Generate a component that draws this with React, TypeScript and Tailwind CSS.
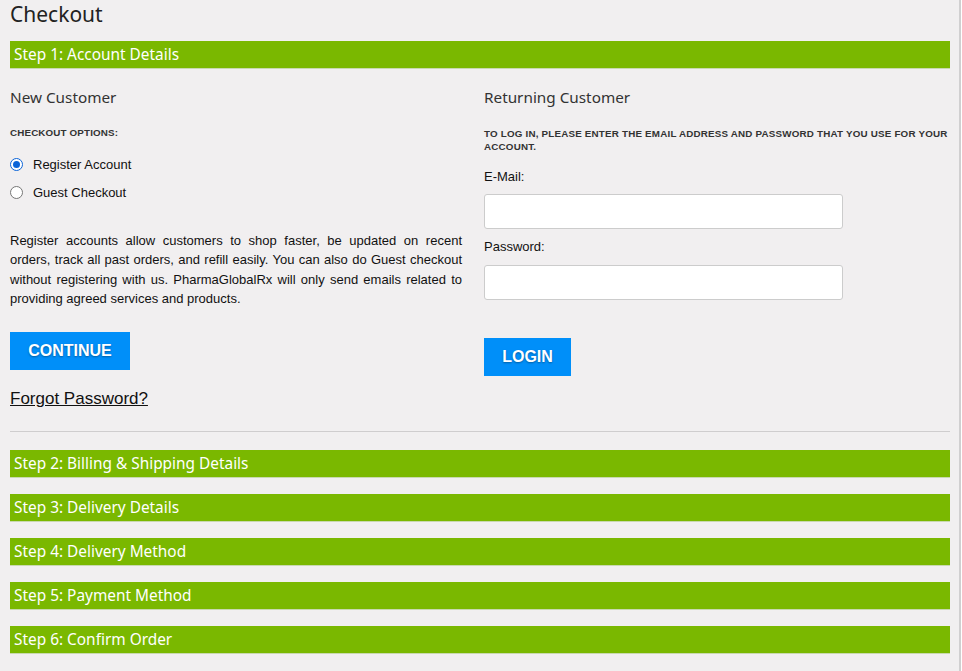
import React from "react";

const steps = [
  "Step 2: Billing & Shipping Details",
  "Step 3: Delivery Details",
  "Step 4: Delivery Method",
  "Step 5: Payment Method",
  "Step 6: Confirm Order",
];

function StepBar({ label }: { label: string }) {
  return (
    <div className="h-[28px] bg-[#7ab800] border-b border-[#c9d9b0] pl-[4px] flex items-center text-white text-[15.4px] font-['Noto_Sans',sans-serif] leading-none">
      {label}
    </div>
  );
}

export default function App() {
  return (
    <div className="min-h-[671px] w-[961px] bg-[#f1eff0] border-r-2 border-[#d0cfd0] font-['Liberation_Sans',Arial,sans-serif] text-[#111]">
      <div className="pl-[10px] w-[950px]">
        <h1 className="font-['Noto_Sans',sans-serif] text-[21px] leading-none text-[#222] pt-[4px] h-[41px]">
          Checkout
        </h1>
        <StepBar label="Step 1: Account Details" />

        <div className="flex gap-[22px] pt-[18px]">
          {/* New customer column */}
          <div className="w-[452px]">
            <h2 className="font-['Noto_Sans',sans-serif] text-[15.3px] text-[#333] leading-[20px]">
              New Customer
            </h2>
            <p className="mt-[20px] text-[9.8px] font-bold text-[#333] tracking-[0.15px] leading-[12px]">
              CHECKOUT OPTIONS:
            </p>
            <div className="mt-[16px] flex flex-col gap-[9px] text-[13px]">
              <label className="flex items-center gap-[10px] h-[19px]">
                <span className="w-[13px] h-[13px] rounded-full border-[1.5px] border-[#0b64d8] bg-white flex items-center justify-center">
                  <span className="w-[7px] h-[7px] rounded-full bg-[#0b64d8]" />
                </span>
                Register Account
              </label>
              <label className="flex items-center gap-[10px] h-[19px]">
                <span className="w-[13px] h-[13px] rounded-full border border-[#767676] bg-white" />
                Guest Checkout
              </label>
            </div>
            <p className="mt-[29px] text-[13px] leading-[19.3px] text-justify">
              Register accounts allow customers to shop faster, be updated on recent
              orders, track all past orders, and refill easily. You can also do Guest
              checkout without registering with us. PharmaGlobalRx will only send
              emails related to providing agreed services and products.
            </p>
            <button className="mt-[24px] w-[120px] h-[38px] bg-[#008ff9] text-white font-bold text-[16px] [text-shadow:0_1px_2px_rgba(0,0,0,0.35)]">
              CONTINUE
            </button>
            <div className="mt-[17px]">
              <a className="text-[17px] underline text-[#111] leading-[20px]">Forgot Password?</a>
            </div>
          </div>

          {/* Returning customer column */}
          <div className="flex-1">
            <h2 className="font-['Noto_Sans',sans-serif] text-[15.3px] text-[#333] leading-[20px]">
              Returning Customer
            </h2>
            <p className="mt-[20px] text-[9.8px] font-bold text-[#333] tracking-[0.2px] leading-[13px]">
              TO LOG IN, PLEASE ENTER THE EMAIL ADDRESS AND PASSWORD THAT YOU USE FOR YOUR ACCOUNT.
            </p>
            <label className="block mt-[16px] text-[13px] leading-[16px]">E-Mail:</label>
            <input className="block mt-[9px] w-[359px] h-[35px] bg-white border border-[#cccccc] rounded-[3px]" />
            <label className="block mt-[10px] text-[13px] leading-[16px]">Password:</label>
            <input
              type="password"
              className="block mt-[10px] w-[359px] h-[35px] bg-white border border-[#cccccc] rounded-[3px]"
            />
            <button className="mt-[38px] w-[87px] h-[38px] bg-[#008ff9] text-white font-bold text-[16px] [text-shadow:0_1px_2px_rgba(0,0,0,0.35)]">
              LOGIN
            </button>
          </div>
        </div>

        <hr className="mt-[20px] border-0 border-t border-[#cfcdce]" />

        <div className="mt-[18px] flex flex-col gap-[16px] pb-[16px]">
          {steps.map((s) => (
            <StepBar key={s} label={s} />
          ))}
        </div>
      </div>
    </div>
  );
}
